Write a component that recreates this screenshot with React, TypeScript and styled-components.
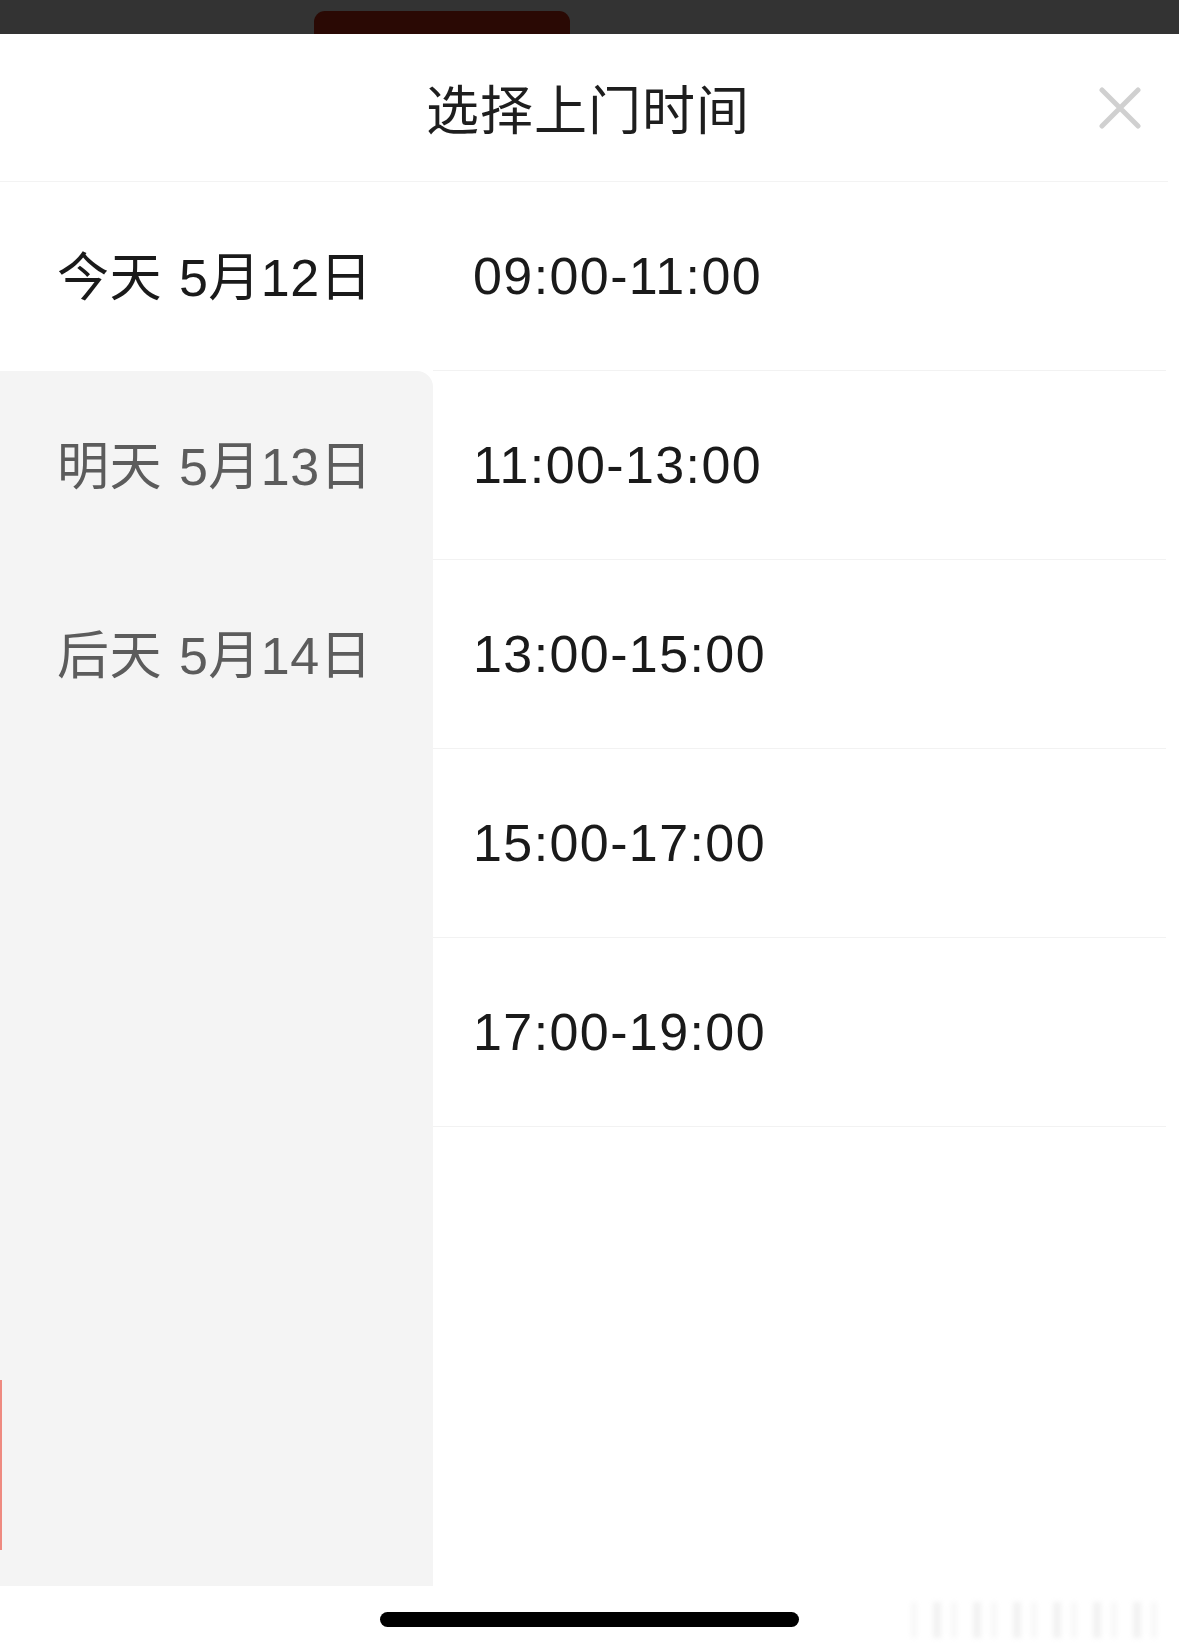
import React, { useState } from 'react';
import styled, { createGlobalStyle } from 'styled-components';

const GlobalStyle = createGlobalStyle`
  html, body {
    margin: 0;
    padding: 0;
    background: #ffffff;
  }
  body {
    font-family: "Liberation Sans", "Noto Sans CJK SC", sans-serif;
    -webkit-font-smoothing: antialiased;
  }
`;

const dates = [
  { id: 'd12', label: '今天 5月12日' },
  { id: 'd13', label: '明天 5月13日' },
  { id: 'd14', label: '后天 5月14日' },
];

const slots = ['09:00-11:00', '11:00-13:00', '13:00-15:00', '15:00-17:00', '17:00-19:00'];

const App: React.FC = () => {
  const [activeDate, setActiveDate] = useState(0);
  const [slot, setSlot] = useState<string>();

  return (
    <Page>
      <GlobalStyle />
      <StatusStrip>
        <StatusTab />
      </StatusStrip>
      <Header>
        <span />
        <Title>选择上门时间</Title>
        <CloseButton aria-label="close">
          <svg width="42" height="42" viewBox="0 0 42 42">
            <path
              d="M3 3 L39 39 M39 3 L3 39"
              stroke="#d0d0d0"
              strokeWidth="5"
              strokeLinecap="round"
              fill="none"
            />
          </svg>
        </CloseButton>
      </Header>
      <Body>
        <DateColumn>
          {dates.map((d, i) => (
            <DateItem
              key={d.id}
              $active={i === activeDate}
              $afterActive={i === activeDate + 1}
              onClick={() => setActiveDate(i)}
            >
              {d.label}
            </DateItem>
          ))}
          <DateFiller $afterActive={activeDate === dates.length - 1}>
            <EdgeMark />
          </DateFiller>
        </DateColumn>
        <SlotColumn>
          {slots.map((s) => (
            <SlotRow key={s} $picked={slot === s} onClick={() => setSlot(s)}>
              {s}
            </SlotRow>
          ))}
        </SlotColumn>
      </Body>
      <HomeBar>
        <HomeIndicator />
        <Watermark />
      </HomeBar>
    </Page>
  );
};

const Page = styled.div`
  width: 1179px;
  min-height: 1651px;
  display: flex;
  flex-direction: column;
  background: #ffffff;
  overflow: hidden;
`;

const StatusStrip = styled.div`
  height: 34px;
  background: #333333;
  display: flex;
  align-items: flex-end;
  padding-left: 314px;
`;

const StatusTab = styled.div`
  width: 256px;
  height: 23px;
  background: #2a0904;
  border-radius: 11px 11px 0 0;
`;

const Header = styled.div`
  height: 147px;
  border-bottom: 1px solid #f3f3f3;
  display: grid;
  grid-template-columns: 1fr auto 1fr;
  align-items: center;
  margin-right: 11px;
`;

const Title = styled.div`
  font-family: "Noto Sans CJK SC", sans-serif;
  font-size: 53px;
  font-weight: 400;
  color: #1e1e1e;
  letter-spacing: 1px;
  line-height: 1;
  padding-left: 8px;
`;

const CloseButton = styled.button`
  justify-self: end;
  margin-right: 27px;
  width: 42px;
  height: 42px;
  padding: 0;
  border: none;
  background: none;
  display: flex;
`;

const Body = styled.div`
  height: 1404px;
  display: flex;
`;

const DateColumn = styled.div`
  width: 433px;
  display: flex;
  flex-direction: column;
  position: relative;
`;

const DateItem = styled.div<{ $active: boolean; $afterActive: boolean }>`
  height: 189px;
  box-sizing: border-box;
  padding-bottom: 6px;
  flex-shrink: 0;
  display: flex;
  align-items: center;
  padding-left: 57px;
  font-size: 52px;
  letter-spacing: 0.5px;
  word-spacing: 2px;
  color: ${(p) => (p.$active ? '#1a1a1a' : '#5c5c5c')};
  background: ${(p) => (p.$active ? '#ffffff' : '#f4f4f4')};
  border-top-right-radius: ${(p) => (p.$afterActive ? '16px' : '0')};
  cursor: pointer;
`;

const DateFiller = styled.div<{ $afterActive: boolean }>`
  flex: 1;
  background: #f4f4f4;
  border-top-right-radius: ${(p) => (p.$afterActive ? '16px' : '0')};
  position: relative;
`;

const EdgeMark = styled.div`
  position: absolute;
  left: 0;
  top: 631px;
  width: 2px;
  height: 170px;
  background: #ee8a80;
`;

const SlotColumn = styled.div`
  flex: 1;
  display: flex;
  flex-direction: column;
  margin-right: 13px;
`;

const SlotRow = styled.div<{ $picked: boolean }>`
  height: 188px;
  border-bottom: 1px solid #f2f2f2;
  display: flex;
  align-items: center;
  padding-left: 40px;
  font-size: 52px;
  letter-spacing: 1.4px;
  color: ${(p) => (p.$picked ? '#e0302a' : '#1a1a1a')};
  cursor: pointer;
`;

const HomeBar = styled.div`
  height: 65px;
  display: flex;
  justify-content: center;
  padding-top: 26px;
  box-sizing: border-box;
  position: relative;
`;

const HomeIndicator = styled.div`
  width: 419px;
  height: 15px;
  border-radius: 8px;
  background: #000000;
`;

const Watermark = styled.div`
  position: absolute;
  right: 12px;
  top: 16px;
  width: 256px;
  height: 36px;
  opacity: 0.2;
  filter: blur(2.5px);
  background: repeating-linear-gradient(
    90deg,
    #d8d8d8 0 6px,
    transparent 6px 22px,
    #bdbdbd 22px 30px,
    transparent 30px 40px
  );
`;

export default App;
